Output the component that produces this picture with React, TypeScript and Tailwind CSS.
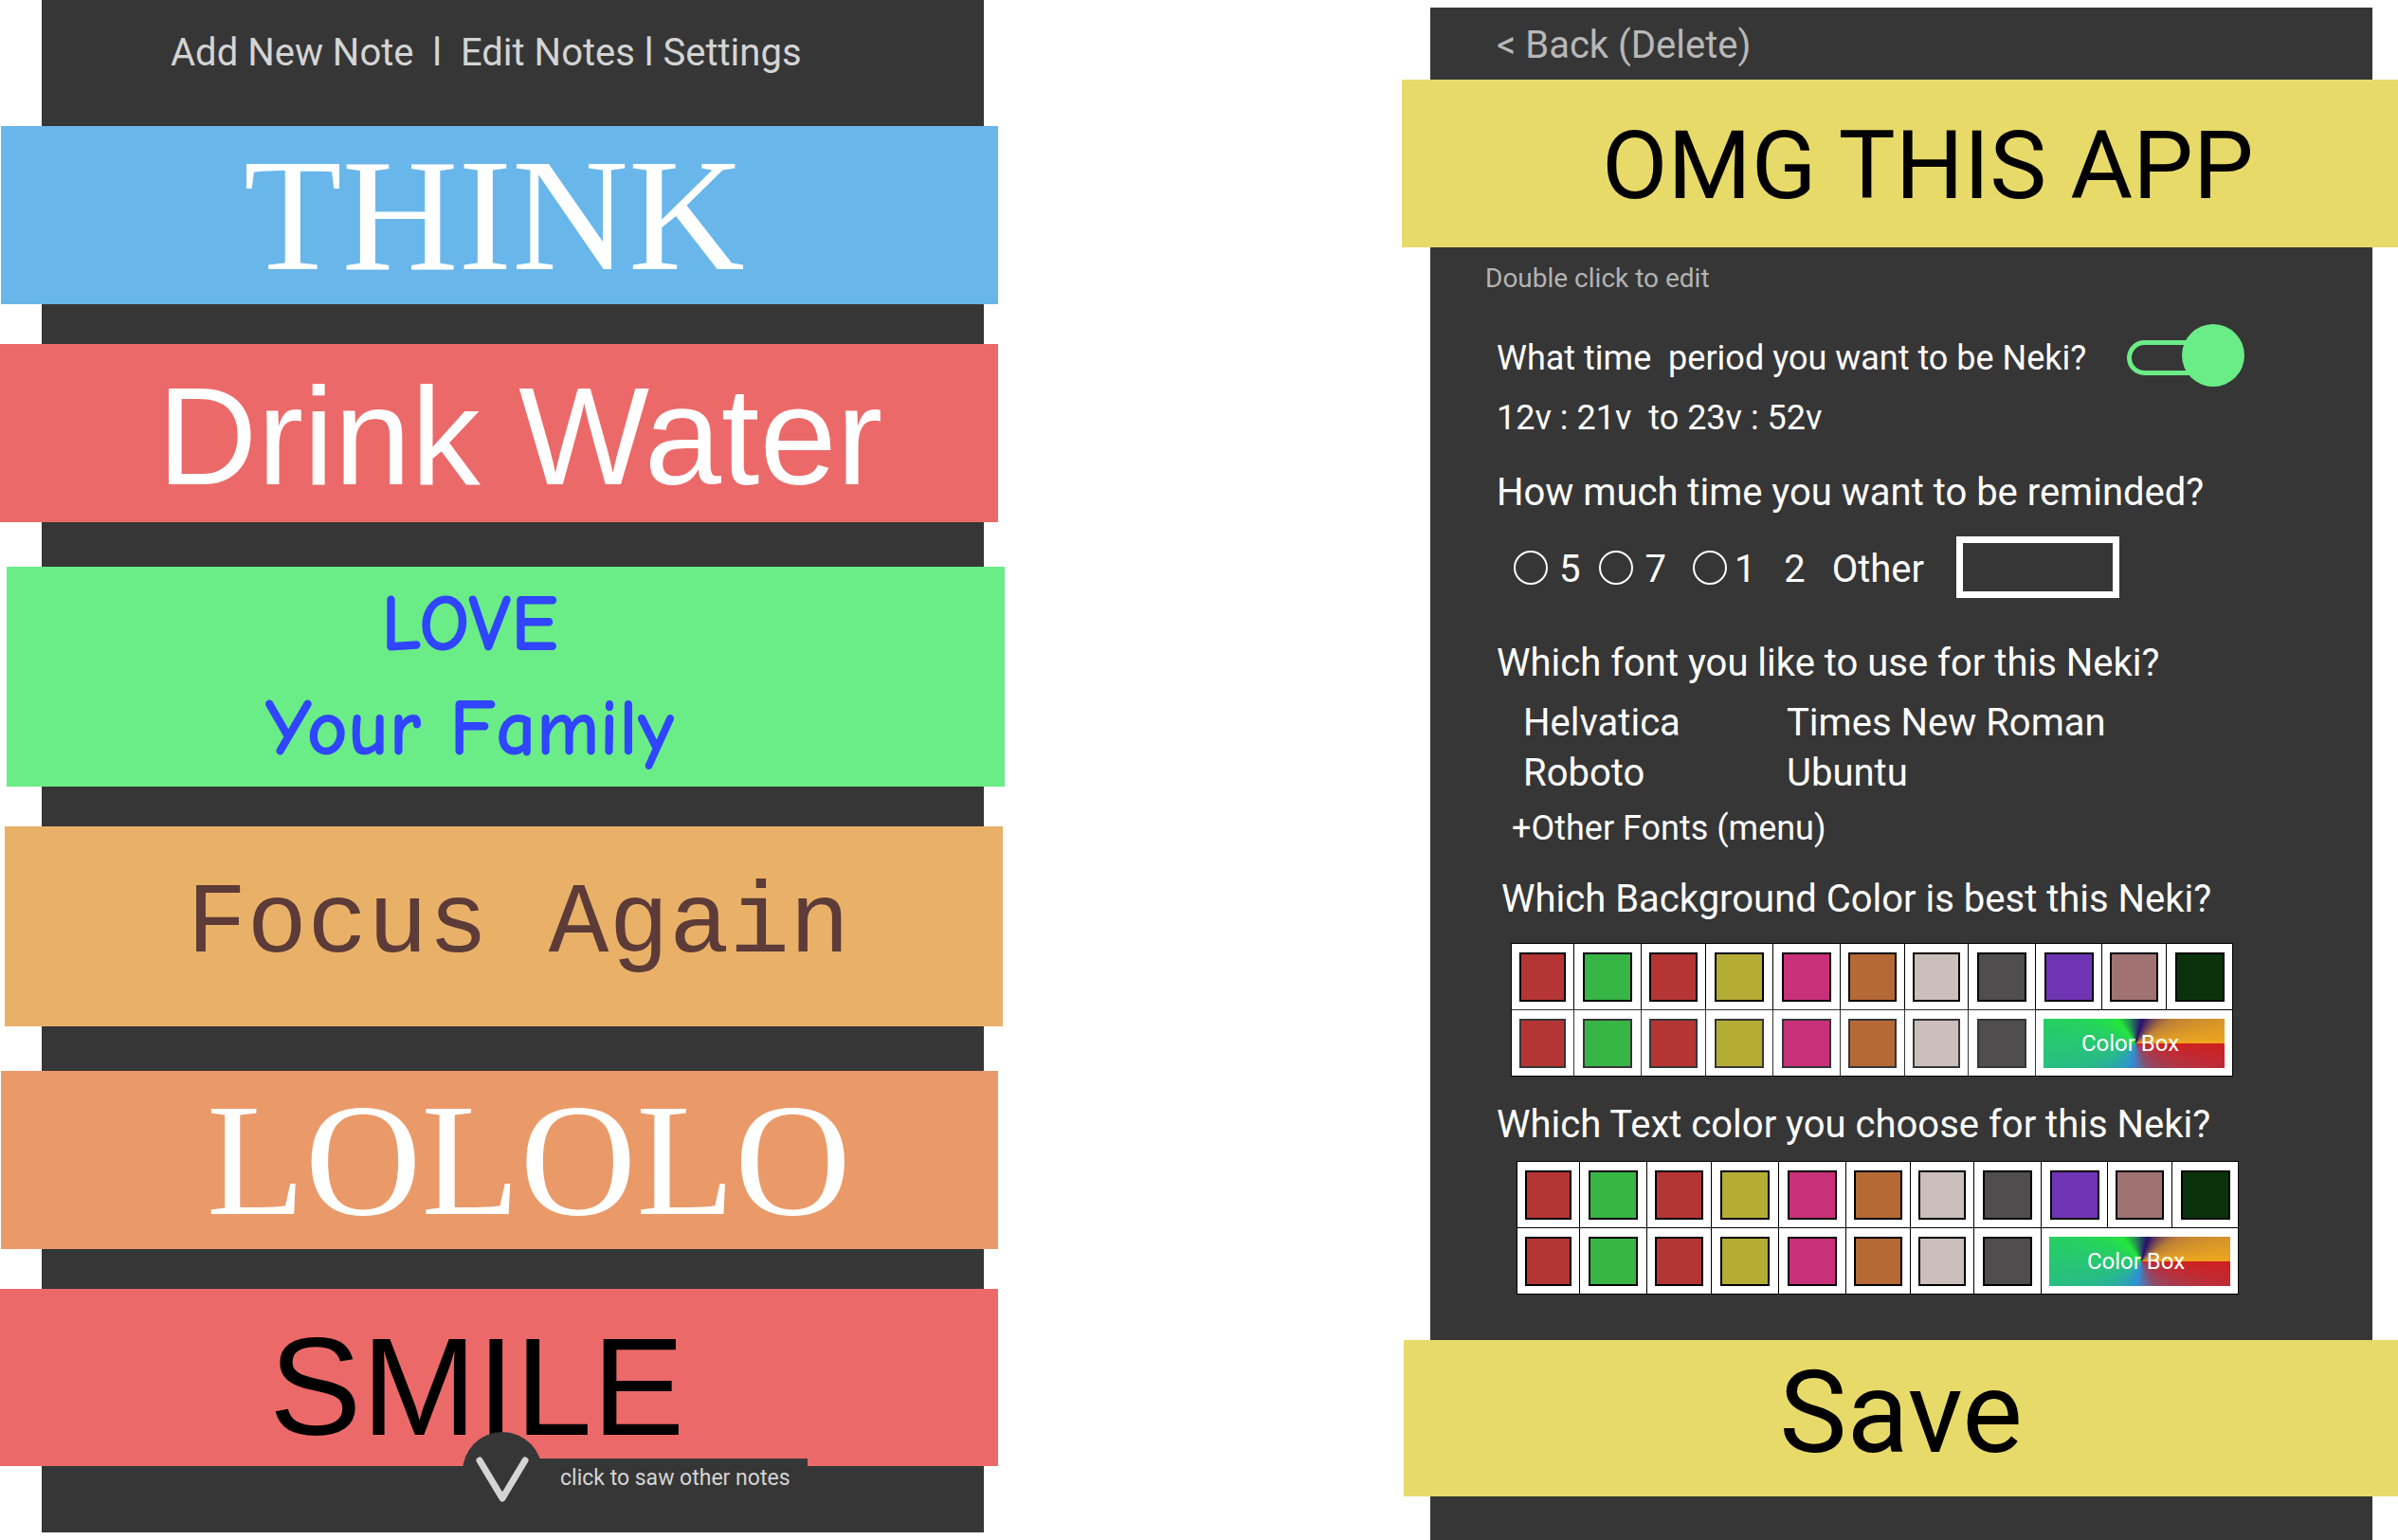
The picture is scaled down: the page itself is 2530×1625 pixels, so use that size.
type Swatch = { name: string; color: string };

const swatches: Swatch[] = [
  { name: "Red", color: "bg-[#b53535]" },
  { name: "Green", color: "bg-[#37b646]" },
  { name: "Crimson", color: "bg-[#b53535]" },
  { name: "Olive", color: "bg-[#b5ac35]" },
  { name: "Pink", color: "bg-[#c8317a]" },
  { name: "Orange", color: "bg-[#b56935]" },
  { name: "Beige", color: "bg-[#cabfba]" },
  { name: "Gray", color: "bg-[#4f4d4e]" },
  { name: "Purple", color: "bg-[#6f35b5]" },
  { name: "Mauve", color: "bg-[#a07272]" },
  { name: "Dark green", color: "bg-[#0b330b]" },
];

function SwatchCell({ swatch, muted }: { swatch: Swatch; muted?: boolean }) {
  const line = muted ? "border-[#363636]" : "border-black";
  return (
    <div className={`flex h-[70px] items-center justify-center border-t border-r bg-white px-2 ${line}`}>
      <button type="button" aria-label={swatch.name} className={`h-[52px] w-[52px] border-2 ${line} ${swatch.color}`} />
    </div>
  );
}

function ColorTable({ label, muted }: { label: string; muted?: boolean }) {
  return (
    <div
      role="group"
      aria-label={label}
      className="grid w-[762px] grid-cols-[66px_71px_68px_71px_71px_68px_67px_71px_70px_68px_70px] border-b border-l border-black"
    >
      {swatches.map((s) => (
        <SwatchCell key={s.name} swatch={s} />
      ))}
      {swatches.slice(0, 8).map((s) => (
        <SwatchCell key={s.name} swatch={s} muted={muted} />
      ))}
      <div className="col-span-3 flex h-[70px] items-center justify-center border-t border-r border-black bg-white">
        <button
          type="button"
          className="h-[52px] w-[191px] bg-[conic-gradient(from_90deg_at_51%_50%,#cf2020_0deg,#b8303c_20deg,#8f4a68_60deg,#2e8fd6_102deg,#28b98a_155deg,#26cc68_190deg,#24e63c_232deg,#280f70_285deg,#b87c38_325deg,#eea71e_360deg)] pr-2 text-[24px] leading-8 text-white"
        >
          Color Box
        </button>
      </div>
    </div>
  );
}

function NotesScreen() {
  return (
    <section aria-label="Notes" className="mr-[22px] ml-11 self-start bg-[#363636] pb-[70px]">
      <nav className="flex h-[133px] items-start pt-8 pl-[136px] text-[40px] leading-12 whitespace-pre text-[#d4d4d4]">
        <a href="#add">Add New Note</a>
        <span>{"  l  "}</span>
        <a href="#edit">Edit Notes</a>
        <span>{" l "}</span>
        <a href="#settings">Settings</a>
      </nav>
      <div className="-mr-[15px] -ml-[43px] flex h-[188px] items-center bg-[#69b7ea] pl-64 font-['Liberation_Serif',serif] text-[170px] leading-none text-white">
        THINK
      </div>
      <div className="mt-[42px] -mr-[15px] -ml-11 flex h-[188px] items-center bg-[#eb6a69] pt-2 pl-[166px] font-['Liberation_Sans',sans-serif] text-[146px] leading-none text-white">
        Drink Water
      </div>
      <div className="mt-[47px] -mr-[22px] -ml-[37px] flex h-[232px] flex-col justify-center bg-[#6aec87] pr-[76px] text-center font-['Comic_Sans_MS','Comic_Neue',Lato,sans-serif] text-[84px] leading-[110px] font-bold text-[#2f45ff]">
        <p>LOVE</p>
        <p>Your Family</p>
      </div>
      <div className="mt-[42px] -mr-5 -ml-[39px] flex h-[211px] items-center bg-[#e9b168] pb-1 pl-48 font-['Liberation_Mono',monospace] text-[106px] leading-none text-[#5c3b38]">
        Focus Again
      </div>
      <div className="mt-[47px] -mr-[15px] -ml-[43px] flex h-[188px] items-center bg-[#ea9a69] pl-[217px] font-['Liberation_Serif',serif] text-[170px] leading-none text-white">
        LOLOLO
      </div>
      <div className="relative mt-[42px] -mr-[15px] -ml-11 flex h-[187px] items-center bg-[#eb6a69] pt-5 pl-[284px] font-['Liberation_Sans',sans-serif] text-[146px] leading-none text-black">
        SMILE
        <button
          type="button"
          className="absolute top-[151px] left-[488px] flex items-start font-[Roboto,sans-serif] text-[23px] leading-8 text-[#d4d4d4]"
        >
          <span className="flex h-[84px] w-[84px] items-center justify-center rounded-full bg-[#363636]">
            <svg width="56" height="50" viewBox="0 0 56 50" fill="none" aria-hidden="true" className="mt-4">
              <path d="M4 5 L28 45 L52 5" stroke="#d4d4d4" strokeWidth="7" strokeLinecap="round" strokeLinejoin="round" />
            </svg>
          </span>
          <span className="mt-7 -ml-3 bg-[#363636] pt-[5px] pr-[18px] pl-[31px]">click to saw other notes</span>
        </button>
      </div>
    </section>
  );
}

function EditScreen() {
  return (
    <section aria-label="Edit note" className="mt-2 mr-[27px] ml-[30px] bg-[#363636] pb-[46px] text-[40px] leading-12 text-white">
      <header className="flex h-[76px] items-center pt-1 pl-[70px] text-[#b8b8b8]">
        <a href="#back">&lt; Back (Delete)</a>
      </header>
      <h1 className="-mr-[27px] -ml-[30px] flex h-[177px] items-center bg-[#e8da69] pt-[3px] pl-[211px] text-[101px] leading-none text-black">
        OMG THIS APP
      </h1>
      <p className="mt-[18px] pl-[58px] text-[28px] leading-[30px] text-[#b3b3b3]">Double click to edit</p>

      <div className="mt-[33px] flex h-[66px] items-center pl-[70px] text-[36px]">
        <span id="period" className="pt-1.5 whitespace-pre">{"What time  period you want to be Neki?"}</span>
        <button type="button" role="switch" aria-checked="true" aria-labelledby="period" className="ml-[43px] flex h-[66px] items-center">
          <span className="mt-1 h-[37px] w-[90px] rounded-full border-[5px] border-[#6aec87]" />
          <span className="-ml-8 h-[66px] w-[66px] rounded-full bg-[#6aec87]" />
        </button>
      </div>
      <p className="mt-[9px] pl-[70px] text-[36px] whitespace-pre">{"12v : 21v  to 23v : 52v"}</p>

      <h2 className="mt-[31px] pl-[70px]">How much time you want to be reminded?</h2>
      <div className="mt-[22px] flex h-[65px] items-center pl-[88px]">
        <label className="flex items-center gap-3">
          <input type="radio" name="times" className="h-9 w-9 appearance-none rounded-full border-2 border-white" />
          <span className="pt-1">5</span>
        </label>
        <label className="ml-[20px] flex items-center gap-3">
          <input type="radio" name="times" className="h-9 w-9 appearance-none rounded-full border-2 border-white" />
          <span className="pt-1">7</span>
        </label>
        <label className="ml-7 flex items-center gap-2">
          <input type="radio" name="times" className="h-9 w-9 appearance-none rounded-full border-2 border-white" />
          <span className="pt-1 whitespace-pre">{"1   2"}</span>
        </label>
        <label className="ml-7 flex items-center gap-[34px]">
          <span className="pt-1">Other</span>
          <input type="text" className="h-[65px] w-[172px] border-[7px] border-white bg-transparent px-2 text-[36px]" />
        </label>
      </div>

      <h2 className="mt-[45px] pl-[70px]">Which font you like to use for this Neki?</h2>
      <div className="mt-3 grid grid-cols-[278px_1fr] justify-items-start pl-[98px] leading-[53px]">
        <button type="button">Helvatica</button>
        <button type="button">Times New Roman</button>
        <button type="button">Roboto</button>
        <button type="button">Ubuntu</button>
      </div>
      <button type="button" className="mt-2 ml-[86px] block text-[36px]">+Other Fonts (menu)</button>

      <h2 className="mt-[27px] pl-[75px]">Which Background Color is best this Neki?</h2>
      <div className="mt-[22px] pl-[85px]">
        <ColorTable label="Background color" muted />
      </div>

      <h2 className="mt-[27px] pl-[70px]">Which Text color you choose for this Neki?</h2>
      <div className="mt-[14px] pl-[91px]">
        <ColorTable label="Text color" />
      </div>

      <div className="mt-12 -mr-[27px] -ml-7 flex h-[165px] bg-[#e8da69]">
        <button type="button" className="flex-1 pb-3 text-center text-[120px] leading-none text-black">
          Save
        </button>
      </div>
    </section>
  );
}

export default function App() {
  return (
    <main className="grid grid-cols-[1060fr_1051fr] gap-x-[419px] overflow-x-hidden bg-white font-[Roboto,sans-serif]">
      <NotesScreen />
      <EditScreen />
    </main>
  );
}
